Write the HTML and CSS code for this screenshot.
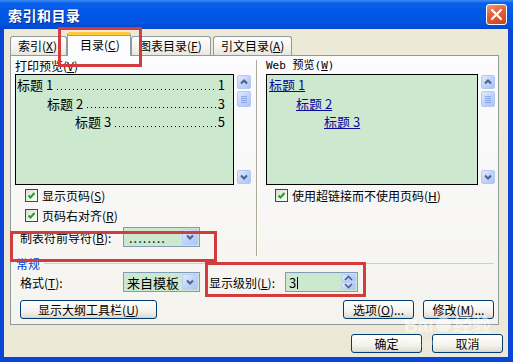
FILE: index.html
```html
<!DOCTYPE html>
<html lang="zh-CN">
<head>
<meta charset="UTF-8">
<title>索引和目录</title>
<link rel="stylesheet" href="styles.css">
</head>
<body>
<div class="window">
    <div class="titlebar">
        <span class="title">索引和目录</span>
        <span class="close">
            <svg width="19" height="19" viewBox="0 0 19 19"><path d="M5 5 L14 14 M14 5 L5 14" stroke="#fff" stroke-width="2.2" stroke-linecap="round"/></svg>
        </span>
    </div>
    <div class="client">
        <div class="tabs">
            <div class="tab t1">索引(<u>X</u>)</div>
            <div class="tab t2 active">目录(<u>C</u>)</div>
            <div class="tab t3">图表目录(<u>F</u>)</div>
            <div class="tab t4">引文目录(<u>A</u>)</div>
        </div>
        <div class="panel">
            <div class="previews">
                <div class="col col-print">
                    <div class="cap">打印预览(<u>V</u>)</div>
                    <div class="pv">
                        <div class="box box-print">
                            <div class="toc"><span>标题 1</span><span class="dots"></span><span>1</span></div>
                            <div class="toc lv2"><span>标题 2</span><span class="dots"></span><span>3</span></div>
                            <div class="toc lv3"><span>标题 3</span><span class="dots"></span><span>5</span></div>
                        </div>
                        <div class="vscroll">
                            <span class="sbtn"><svg width="12" height="12" viewBox="0 0 12 12"><path d="M3 7.5 L6 4.5 L9 7.5" fill="none" stroke="#4d6185" stroke-width="2"/></svg></span>
                            <span class="thumb"><i></i><i></i><i></i><i></i></span>
                            <span class="track"></span>
                            <span class="sbtn"><svg width="12" height="12" viewBox="0 0 12 12"><path d="M3 4.5 L6 7.5 L9 4.5" fill="none" stroke="#4d6185" stroke-width="2"/></svg></span>
                        </div>
                    </div>
                    <div class="chk"><span class="cb"><svg width="11" height="11" viewBox="0 0 11 11"><path d="M2.5 5.5 L4.5 7.5 L8.5 3" fill="none" stroke="#21a121" stroke-width="2"/></svg></span>显示页码(<u>S</u>)</div>
                    <div class="chk"><span class="cb"><svg width="11" height="11" viewBox="0 0 11 11"><path d="M2.5 5.5 L4.5 7.5 L8.5 3" fill="none" stroke="#21a121" stroke-width="2"/></svg></span>页码右对齐(<u>R</u>)</div>
                    <div class="field leader">
                        <span class="lbl">制表符前导符(<u>B</u>):</span>
                        <div class="combo"><span class="val dotted">........</span><span class="drop"><svg width="12" height="12" viewBox="0 0 12 12"><path d="M3 4.5 L6 7.5 L9 4.5" fill="none" stroke="#4d6185" stroke-width="2"/></svg></span></div>
                    </div>
                </div>
                <div class="sep"></div>
                <div class="col col-web">
                    <div class="cap web">Web 预览(<u>W</u>)</div>
                    <div class="pv">
                        <div class="box box-web">
                            <div class="link"><a>标题 1</a></div>
                            <div class="link lv2"><a>标题 2</a></div>
                            <div class="link lv3"><a>标题 3</a></div>
                        </div>
                        <div class="vscroll">
                            <span class="sbtn"><svg width="12" height="12" viewBox="0 0 12 12"><path d="M3 7.5 L6 4.5 L9 7.5" fill="none" stroke="#4d6185" stroke-width="2"/></svg></span>
                            <span class="thumb"><i></i><i></i><i></i><i></i></span>
                            <span class="track"></span>
                            <span class="sbtn"><svg width="12" height="12" viewBox="0 0 12 12"><path d="M3 4.5 L6 7.5 L9 4.5" fill="none" stroke="#4d6185" stroke-width="2"/></svg></span>
                        </div>
                    </div>
                    <div class="chk"><span class="cb"><svg width="11" height="11" viewBox="0 0 11 11"><path d="M2.5 5.5 L4.5 7.5 L8.5 3" fill="none" stroke="#21a121" stroke-width="2"/></svg></span>使用超链接而不使用页码(<u>H</u>)</div>
                </div>
            </div>

            <div class="group"><span>常规</span></div>

            <div class="field format">
                <span class="lbl">格式(<u>T</u>):</span>
                <div class="combo"><span class="val">来自模板</span><span class="drop"><svg width="12" height="12" viewBox="0 0 12 12"><path d="M3 4.5 L6 7.5 L9 4.5" fill="none" stroke="#4d6185" stroke-width="2"/></svg></span></div>
                <span class="lbl lbl-level">显示级别(<u>L</u>):</span>
                <div class="spin"><span class="val">3<b class="caret"></b></span>
                    <span class="arrows">
                        <span><svg width="9" height="6" viewBox="0 0 9 6"><path d="M1 5 L4.5 1.5 L8 5" fill="none" stroke="#4d6185" stroke-width="1.6"/></svg></span>
                        <span><svg width="9" height="6" viewBox="0 0 9 6"><path d="M1 1 L4.5 4.5 L8 1" fill="none" stroke="#4d6185" stroke-width="1.6"/></svg></span>
                    </span>
                </div>
            </div>

            <div class="btn-row">
                <button class="btn outline-btn">显示大纲工具栏(<u>U</u>)</button>
                <button class="btn opt-btn">选项(<u>O</u>)...</button>
                <button class="btn">修改(<u>M</u>)...</button>
            </div>
        </div>
        <div class="footer">
            <button class="btn">确定</button>
            <button class="btn">取消</button>
        </div>
    </div>

    <!-- 标注框 -->
    <div class="mark mark-tab"></div>
    <div class="mark mark-leader"></div>
    <div class="mark mark-level"></div>

    <div class="watermark">Bai<span class="paw"></span>经验<small>jingyan.baidu.com</small></div>
</div>
</body>
</html>
```

FILE: styles.css
```css
body {
    margin: 0;
    font-family: "Noto Sans CJK SC", "Liberation Sans", sans-serif;
    font-size: 12px;
    color: #000;
}

.window {
    position: relative;
    width: 513px;
    height: 362px;
    box-sizing: border-box;
    background: #0a46d6;
    padding: 0 5px 5px 4px;
    overflow: hidden;
}

.titlebar {
    height: 29px;
    margin: 0 -5px 0 -4px;
    background: linear-gradient(180deg, #3e8ef5 0, #0b60ea 3px, #0157e8 40%, #0253e0 80%, #0346cc 100%);
    display: flex;
    align-items: center;
    justify-content: space-between;
    padding: 0 6px 0 8px;
}

.title {
    color: #fff;
    font-weight: bold;
    font-size: 14px;
    letter-spacing: 0.5px;
    text-shadow: 1px 1px 0 #0a2a8a;
}

.close {
    width: 19px;
    height: 19px;
    border: 1px solid #fff;
    border-radius: 3px;
    background: linear-gradient(160deg, #eb9a7e 0, #e0643e 40%, #c8431a 100%);
    display: flex;
    align-items: center;
    justify-content: center;
}

.client {
    background: #ece9d8;
    height: 328px;
    padding: 4px 0 0 6px;
    box-sizing: border-box;
}

/* 标签页 */
.tabs {
    display: flex;
    align-items: flex-end;
    height: 22px;
    position: relative;
    z-index: 2;
}

.tab {
    height: 19px;
    box-sizing: border-box;
    border: 1px solid #919b9c;
    border-bottom: none;
    border-radius: 3px 3px 0 0;
    background: linear-gradient(#fefefe, #f4f3ee 60%, #e8e6dc);
    line-height: 18px;
    padding-left: 7px;
    white-space: nowrap;
}

.t1 { width: 57px; }
.t2 { width: 64px; }
.t3 { width: 80px; }
.t4 { width: 79px; margin-left: 2px; }

.tab.active {
    height: 24px;
    margin-bottom: -1px;
    background: #fcfcfe;
    border-top: 3px solid #ffc83c;
    box-shadow: inset 0 1px 0 #e68b2c;
    padding-top: 1px;
    padding-left: 12px;
    line-height: 18px;
}

.panel {
    width: 489px;
    height: 270px;
    box-sizing: border-box;
    border: 1px solid #919b9c;
    background: linear-gradient(#fcfcfe, #f4f3ee);
    padding: 3px 4px 0 4px;
}

.previews {
    display: flex;
    height: 197px;
}

.col-print { width: 236px; }
.col-web { width: 229px; }

.sep {
    width: 1px;
    margin: 1px 8px 0 5px;
    border-left: 1px solid #aca899;
    border-right: 1px solid #fff;
}

.cap {
    height: 15px;
    line-height: 14px;
    white-space: nowrap;
}

.cap.web {
    font-family: "DejaVu Sans Mono", "Noto Sans CJK SC", monospace;
    font-size: 11px;
}

.pv {
    display: flex;
    height: 111px;
}

.box {
    box-sizing: border-box;
    border: 1px solid #000;
    background: #cce8cf;
    padding: 1px 8px 0 1px;
    font-size: 13px;
    line-height: 18.5px;
}

.box-print { width: 219px; }
.box-web { width: 212px; padding-left: 2px; }

.toc {
    display: flex;
    white-space: nowrap;
}

.toc .dots {
    flex: 1;
    margin: 0 2px 0 4px;
    background: linear-gradient(90deg, #000 1px, transparent 1px) left bottom 5px / 4px 1px repeat-x;
}

.lv2 { padding-left: 30px; }
.lv3 { padding-left: 58px; }
.box-web .lv2 { padding-left: 27px; }
.box-web .lv3 { padding-left: 55px; }

.link a {
    color: #0a0a9c;
    text-decoration: underline;
}

.vscroll {
    width: 14px;
    margin-left: 3px;
    display: flex;
    flex-direction: column;
    padding: 1px 0;
}

.sbtn, .thumb {
    width: 14px;
    height: 14px;
    box-sizing: border-box;
    border: 1px solid #b4c8f6;
    border-radius: 2px;
    background: linear-gradient(135deg, #e2ebfe, #c1d3fb 50%, #aec4f5);
    display: flex;
    align-items: center;
    justify-content: center;
}

.thumb {
    height: 16px;
    margin-top: 2px;
    flex-direction: column;
    gap: 1px;
}

.thumb i {
    display: block;
    width: 6px;
    height: 1px;
    background: #8aa6e5;
}

.track { flex: 1; }

/* 复选框 */
.chk {
    height: 20px;
    display: flex;
    align-items: center;
    padding-left: 10px;
    white-space: nowrap;
}

.chk:first-of-type { margin-top: 6px; }
.col-web .chk { padding-left: 9px; }

.cb {
    width: 13px;
    height: 13px;
    box-sizing: border-box;
    border: 1px solid #1c5180;
    background: linear-gradient(135deg, #dcdcd7, #fff);
    margin-right: 4px;
    display: flex;
    align-items: center;
    justify-content: center;
}

.field {
    display: flex;
    align-items: center;
    height: 22px;
    padding-left: 5px;
}

.leader { margin-top: 1px; }

.lbl {
    width: 103px;
    white-space: nowrap;
}

.combo, .spin {
    height: 20px;
    box-sizing: border-box;
    border: 1px solid #7f9db9;
    background: #cce8cf;
    display: flex;
    align-items: center;
}

.combo { width: 77px; }

.val {
    flex: 1;
    padding-left: 3px;
    font-size: 13px;
}

.val.dotted {
    letter-spacing: 1px;
    padding-left: 5px;
}

.drop {
    width: 16px;
    height: 16px;
    margin-right: 1px;
    border: 1px solid #b9ccf7;
    box-sizing: border-box;
    border-radius: 2px;
    background: linear-gradient(135deg, #e2ebfe, #c1d3fb 50%, #aec4f5);
    display: flex;
    align-items: center;
    justify-content: center;
}

.group {
    display: flex;
    align-items: center;
    height: 14px;
    margin-top: 0;
    padding-left: 1px;
    color: #0046d5;
}

.group::after {
    content: "";
    flex: 1;
    height: 1px;
    background: #d0d0bf;
    margin-left: 4px;
}

.format { height: 20px; margin-top: 2px; }

.lbl-level {
    width: 76px;
    margin-left: 9px;
}

.spin { width: 73px; }

.caret {
    display: inline-block;
    width: 1px;
    height: 12px;
    background: #000;
    vertical-align: -1px;
    margin-left: 1px;
}

.arrows {
    display: flex;
    flex-direction: column;
    width: 15px;
    height: 16px;
    margin-right: 1px;
}

.arrows span {
    flex: 1;
    box-sizing: border-box;
    border: 1px solid #b9ccf7;
    border-radius: 2px;
    background: linear-gradient(135deg, #e2ebfe, #c1d3fb 50%, #aec4f5);
    display: flex;
    align-items: center;
    justify-content: center;
}

/* 按钮 */
.btn-row {
    display: flex;
    gap: 9px;
    margin-top: 8px;
    padding-left: 5px;
}

.btn {
    height: 19px;
    box-sizing: border-box;
    border: 1px solid #003c74;
    border-radius: 3px;
    background: linear-gradient(#ffffff, #f3f2ed 60%, #e3e0d5 90%, #d6d0c5);
    font-family: inherit;
    font-size: 12px;
    line-height: 16px;
    padding: 0;
    color: #000;
    width: 71px;
}

.outline-btn { width: 137px; }
.opt-btn { margin-left: auto; }

.footer {
    display: flex;
    justify-content: flex-end;
    gap: 10px;
    margin-top: 9px;
    padding-right: 5px;
}

/* 红色标注框 */
.mark {
    position: absolute;
    border: 3px solid #d23c3c;
    z-index: 5;
}

.mark-tab { left: 58px; top: 27px; width: 78px; height: 34px; }
.mark-leader { left: 10px; top: 231px; width: 201px; height: 25px; }
.mark-level { left: 205px; top: 262px; width: 155px; height: 29px; }

.watermark {
    position: absolute;
    left: 404px;
    top: 316px;
    color: rgba(255, 255, 255, 0.55);
    font-family: "Liberation Sans", sans-serif;
    font-size: 19px;
    font-weight: bold;
    line-height: 20px;
    z-index: 6;
    white-space: nowrap;
}

.watermark .paw {
    display: inline-block;
    width: 15px;
    height: 15px;
    border-radius: 50%;
    background: rgba(255, 255, 255, 0.5);
    margin: 0 2px;
}

.watermark small {
    display: block;
    font-size: 9px;
    font-weight: normal;
    line-height: 12px;
    color: rgba(255, 255, 255, 0.35);
    padding-left: 6px;
}
```
